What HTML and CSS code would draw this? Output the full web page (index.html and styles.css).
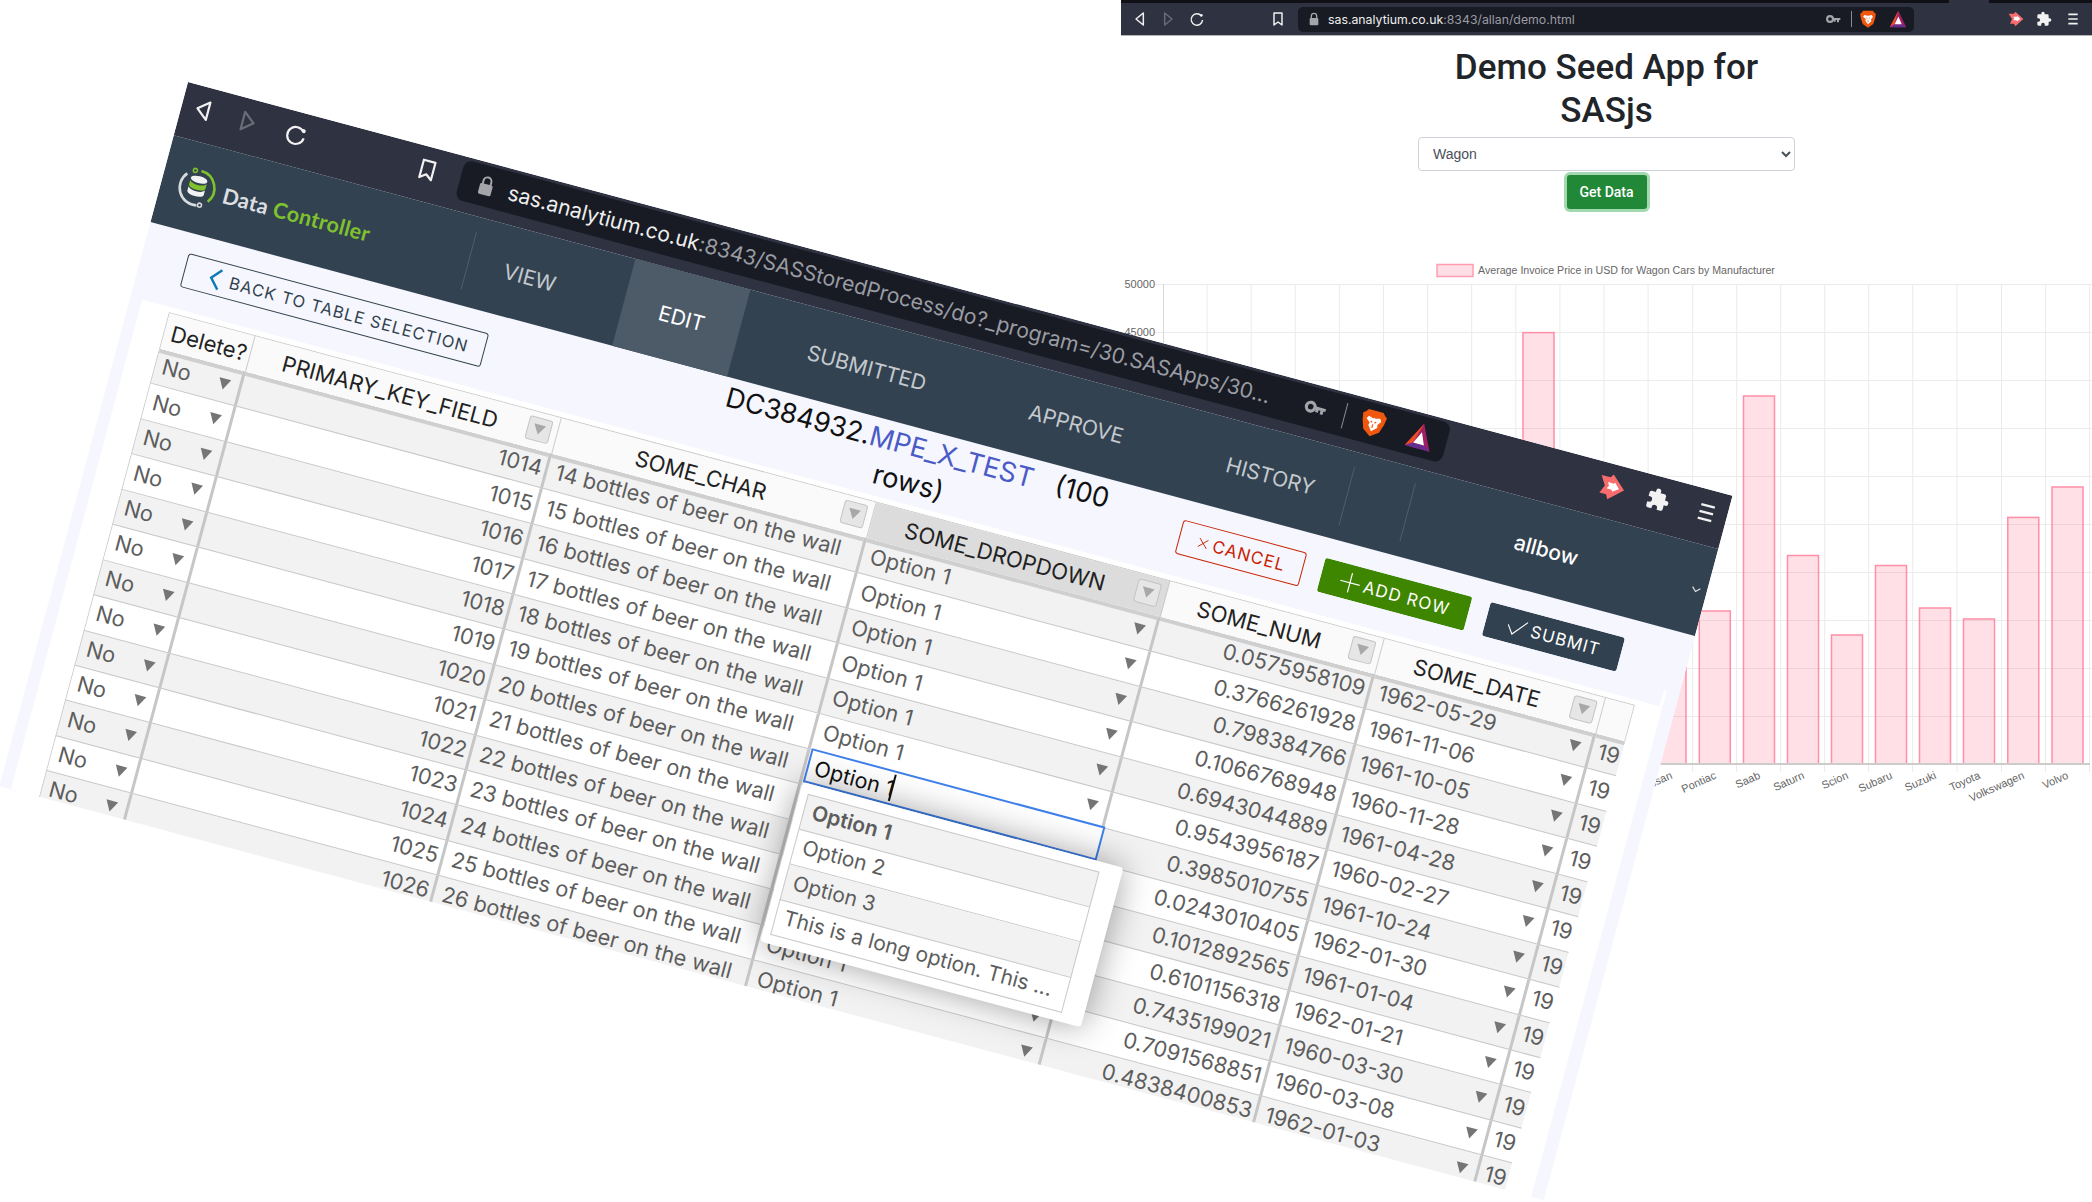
FILE: index.html
```html
<!DOCTYPE html>
<html>

<head>
  <title>Data Controller and Demo Seed App</title>
  <link rel="stylesheet" href="styles.css">
</head>

<body>
  <svg class="icon-defs">
    <symbol id="i-back" viewBox="0 0 24 24"><path d="M17 3 6 12l11 9z" fill="none" stroke="currentColor" stroke-width="2.2" stroke-linejoin="round"/></symbol>
    <symbol id="i-fwd" viewBox="0 0 24 24"><path d="m7 3 11 9-11 9z" fill="none" stroke="currentColor" stroke-width="2.2" stroke-linejoin="round"/></symbol>
    <symbol id="i-reload" viewBox="0 0 24 24"><path d="M18.5 7.5a8.5 8.5 0 1 0 1.8 6" fill="none" stroke="currentColor" stroke-width="2.2"/><circle cx="18.5" cy="6.5" r="2" fill="currentColor"/></symbol>
    <symbol id="i-mark" viewBox="0 0 24 24"><path d="M6 3h12v18l-6-4.5L6 21z" fill="none" stroke="currentColor" stroke-width="2.2" stroke-linejoin="round"/></symbol>
    <symbol id="i-lock" viewBox="0 0 24 24"><path d="M8 11V7.5a4 4 0 0 1 8 0V11" fill="none" stroke="currentColor" stroke-width="2"/><rect x="5.5" y="10.5" width="13" height="11" rx="1.5" fill="currentColor"/></symbol>
    <symbol id="i-key" viewBox="0 0 24 24"><circle cx="7.5" cy="12" r="4.4" fill="none" stroke="currentColor" stroke-width="3.2"/><path d="M12 10.5h11v3h-2v3.5h-3v-3.500h-2v2.500h-3v-2.500h-1z" fill="currentColor"/></symbol>
    <symbol id="i-brave" viewBox="0 0 24 24"><path d="M5.500 1h13l2 2.500L22.500 5l-1 6-2.500 7.500L12 23.500l-7-5L2.500 11l-1-6 2-1.500z" fill="#f1570f"/><path d="M7 6.500l4 1.200 1-.400 1 .400 4-1.200 1.500 2.500-2.500 3.500 .5 2.500L12 19l-3.500-4.500.5-2.500L5.500 9z" fill="#fff"/><path d="M9.500 10.500l1.500.800M14.500 10.500l-1.500.800M12 13v3" stroke="#f1570f" stroke-width="1" fill="none"/></symbol>
    <symbol id="i-bat" viewBox="0 0 24 24"><path d="M12.500 1 1 23h22z" fill="#9e1f63"/><path d="M12.500 1 1 23l6.500-4z" fill="#ef4a26"/><path d="m1 23 6.500-4h9.500L23 23z" fill="#662d91"/><path d="m12.500 8.500-5 10.500h9.500z" fill="#fff"/></symbol>
    <symbol id="i-flag" viewBox="0 0 24 24"><path d="M1 4h8l2-3 12 11-12 11-2-4H3l3-7z" fill="#f76d6d"/><path d="M8 8.500h5l1-1 4.500 4.500-5 3.500-1-1.500H8l1.500-2.500z" fill="#fff"/></symbol>
    <symbol id="i-puzzle" viewBox="0 0 24 24"><path d="M20.500 11H19V7a2 2 0 0 0-2-2h-4V3.500a2.500 2.500 0 0 0-5 0V5H4a2 2 0 0 0-2 2v3.800h1.500a2.700 2.700 0 0 1 0 5.400H2V20a2 2 0 0 0 2 2h3.800v-1.500a2.700 2.700 0 0 1 5.400 0V22H17a2 2 0 0 0 2-2v-4h1.500a2.500 2.500 0 0 0 0-5z" fill="currentColor"/></symbol>
    <symbol id="i-menu" viewBox="0 0 24 24"><path d="M5 5h14M5 12h14M5 19h14" fill="none" stroke="currentColor" stroke-width="2.400"/></symbol>
  </svg>

  <div class="stage">

    <section class="demo-window">
      <div class="tab-strip"><span class="tab-strip-active"></span></div>
      <div class="tbar tbar-small">
        <svg class="ico ico-back"><use href="#i-back"/></svg>
        <svg class="ico ico-fwd"><use href="#i-fwd"/></svg>
        <svg class="ico ico-reload"><use href="#i-reload"/></svg>
        <svg class="ico ico-mark"><use href="#i-mark"/></svg>
        <div class="pill">
          <svg class="ico ico-lock"><use href="#i-lock"/></svg>
          <span class="url"><b>sas.analytium.co.uk</b>:8343/allan/demo.html</span>
          <svg class="ico ico-key"><use href="#i-key"/></svg>
          <span class="pill-sep"></span>
          <svg class="ico ico-brave"><use href="#i-brave"/></svg>
          <svg class="ico ico-bat"><use href="#i-bat"/></svg>
        </div>
        <svg class="ico ico-flag"><use href="#i-flag"/></svg>
        <svg class="ico ico-puzzle"><use href="#i-puzzle"/></svg>
        <svg class="ico ico-menu"><use href="#i-menu"/></svg>
      </div>

      <div class="demo-body">
        <h1 class="demo-title">Demo Seed App for<br>SASjs</h1>
        <select class="demo-select">
          <option>Wagon</option>
        </select>
        <button class="demo-btn">Get Data</button>

        <svg class="chart" viewBox="1121 256 971 560" width="971" height="560">
          <rect class="swatch" x="1437" y="264.500" width="36" height="12"/>
          <text class="legend" x="1478" y="274">Average Invoice Price in USD for Wagon Cars by Manufacturer</text>
          <text class="y-label" x="1155" y="288">50000</text>
          <text class="y-label" x="1155" y="336">45000</text>

          <path class="grid" d="M1155 284.500H2092M1155 332.500H2092M1155 380.500H2092M1155 428.500H2092M1155 476.500H2092M1155 524.500H2092M1155 572.500H2092M1155 620.500H2092M1155 668.500H2092M1155 716.500H2092"/>
          <path class="grid" d="M1207.100 284V772M1251.200 284V772M1295.300 284V772M1339.400 284V772M1383.500 284V772M1427.600 284V772M1471.700 284V772M1515.800 284V772M1559.900 284V772M1604 284V772M1648.100 284V772M1692.700 284V772M1736.700 284V772M1780.700 284V772M1824.700 284V772M1868.700 284V772M1912.700 284V772M1957 284V772M2001.500 284V772M2045.500 284V772M2089.500 284V772"/>
          <path class="axis-y" d="M1163.500 284V772"/>

          <rect class="bar" x="1523" y="332.600" width="31" height="431"/>
          <rect class="bar" x="1655" y="600" width="31" height="164"/>
          <rect class="bar" x="1699.300" y="611" width="31" height="153"/>
          <rect class="bar" x="1743.500" y="396" width="31" height="368"/>
          <rect class="bar" x="1787.500" y="555.500" width="31" height="208.500"/>
          <rect class="bar" x="1831.500" y="635" width="31" height="129"/>
          <rect class="bar" x="1875.500" y="565.500" width="31" height="198.500"/>
          <rect class="bar" x="1919.500" y="608" width="31" height="156"/>
          <rect class="bar" x="1963.500" y="619" width="31" height="145"/>
          <rect class="bar" x="2007.800" y="517.400" width="31" height="246.600"/>
          <rect class="bar" x="2052" y="487" width="31" height="277"/>
          <path class="axis-x" d="M1163 764H2090"/>

          <text class="x-label" transform="translate(1673 778) rotate(-24)">Nissan</text>
          <text class="x-label" transform="translate(1717 778) rotate(-24)">Pontiac</text>
          <text class="x-label" transform="translate(1761 778) rotate(-24)">Saab</text>
          <text class="x-label" transform="translate(1805 778) rotate(-24)">Saturn</text>
          <text class="x-label" transform="translate(1849 778) rotate(-24)">Scion</text>
          <text class="x-label" transform="translate(1893 778) rotate(-24)">Subaru</text>
          <text class="x-label" transform="translate(1937 778) rotate(-24)">Suzuki</text>
          <text class="x-label" transform="translate(1981 778) rotate(-24)">Toyota</text>
          <text class="x-label" transform="translate(2025 778) rotate(-24)">Volkswagen</text>
          <text class="x-label" transform="translate(2069 778) rotate(-24)">Volvo</text>
        </svg>
      </div>
    </section>

    <section class="dc-window">
      <div class="tbar tbar-large">
        <svg class="ico ico-back"><use href="#i-back"/></svg>
        <svg class="ico ico-fwd"><use href="#i-fwd"/></svg>
        <svg class="ico ico-reload"><use href="#i-reload"/></svg>
        <svg class="ico ico-mark"><use href="#i-mark"/></svg>
        <div class="pill">
          <svg class="ico ico-lock"><use href="#i-lock"/></svg>
          <span class="url"><b>sas.analytium.co.uk</b>:8343/SASStoredProcess/do?_program=/30.SASApps/30...</span>
          <svg class="ico ico-key"><use href="#i-key"/></svg>
          <span class="pill-sep"></span>
          <svg class="ico ico-brave"><use href="#i-brave"/></svg>
          <svg class="ico ico-bat"><use href="#i-bat"/></svg>
        </div>
        <svg class="ico ico-flag"><use href="#i-flag"/></svg>
        <svg class="ico ico-puzzle"><use href="#i-puzzle"/></svg>
        <svg class="ico ico-menu"><use href="#i-menu"/></svg>
      </div>

      <header class="app-header">
        <div class="logo">
          <svg class="logo-mark" viewBox="0 0 40 40">
            <path d="M20 2.500a17.500 17.500 0 0 1 14 28" fill="none" stroke="#7fc22e" stroke-width="2.600"/>
            <path d="M7 8.500a17.500 17.500 0 0 0 17 28.500" fill="none" stroke="#d8dbde" stroke-width="2.600"/>
            <circle cx="14" cy="3.500" r="2" fill="none" stroke="#7fc22e" stroke-width="1.500"/>
            <circle cx="27" cy="36" r="2" fill="none" stroke="#d8dbde" stroke-width="1.500"/>
            <ellipse cx="20" cy="11.500" rx="8.500" ry="3.500" fill="#f1f2f3"/>
            <path d="M11.500 14v4.500c0 2 3.800 3.500 8.500 3.500s8.500-1.500 8.500-3.500V14c-1.500 2-5 3-8.500 3s-7-1-8.500-3z" fill="#7fc22e"/>
            <path d="M11.500 20.500V25c0 2 3.800 3.500 8.500 3.500s8.500-1.500 8.500-3.500v-4.500c-1.500 2-5 3-8.500 3s-7-1-8.500-3z" fill="#f1f2f3"/>
          </svg>
          <span class="logo-text">Data <em>Controller</em></span>
        </div>
        <nav class="app-nav">
          <a class="nav-tab">VIEW</a>
          <a class="nav-tab is-active">EDIT</a>
          <a class="nav-tab">SUBMITTED</a>
          <a class="nav-tab">APPROVE</a>
          <a class="nav-tab">HISTORY</a>
        </nav>
        <span class="hdr-sep"></span>
        <span class="hdr-sep hdr-sep-user"></span>
        <div class="user">
          <span class="user-name">allbow</span>
          <svg class="user-chev" viewBox="0 0 12 12"><path d="m2 4 4 4 4-4" fill="none" stroke="currentColor" stroke-width="1.200"/></svg>
        </div>
      </header>

      <div class="toolbar">
        <div class="toolbar-left">
          <button class="btn btn-back">
            <svg class="btn-chev" viewBox="0 0 14 24"><path d="M12 2 3 12l9 10" fill="none" stroke="#0a7cb5" stroke-width="2.400"/></svg>
            BACK TO TABLE SELECTION
          </button>
        </div>
        <h2 class="table-title">DC384932.<span class="table-name">MPE_X_TEST</span>&nbsp;&nbsp; (100<br>rows)</h2>
        <div class="toolbar-right">
          <button class="btn btn-cancel">
            <svg class="btn-ico" viewBox="0 0 16 16"><path d="m3 3 10 10M13 3 3 13" fill="none" stroke="currentColor" stroke-width="1"/></svg>
            CANCEL
          </button>
          <button class="btn btn-add">
            <svg class="btn-ico btn-ico-big" viewBox="0 0 22 22"><path d="M11 1v20M1 11h20" fill="none" stroke="currentColor" stroke-width="1.200"/></svg>
            ADD ROW
          </button>
          <button class="btn btn-submit">
            <svg class="btn-ico btn-ico-big" viewBox="0 0 26 22"><path d="m2 10 7 10L24 2" fill="none" stroke="currentColor" stroke-width="1.300"/></svg>
            SUBMIT
          </button>
        </div>
      </div>

      <div class="panel">
        <div class="hot">
          <div class="hot-row hot-head">
            <div class="cell"><span>Delete?</span></div>
            <div class="cell head-mid"><span>PRIMARY_KEY_FIELD</span><i class="filter"></i></div>
            <div class="cell head-mid"><span>SOME_CHAR</span><i class="filter"></i></div>
            <div class="cell head-mid head-on"><span>SOME_DROPDOWN</span><i class="filter"></i></div>
            <div class="cell head-mid"><span>SOME_NUM</span><i class="filter"></i></div>
            <div class="cell head-mid"><span>SOME_DATE</span><i class="filter"></i></div>
            <div class="cell"></div>
          </div>

          <div class="hot-row"><div class="cell dd">No</div><div class="cell num">1014</div><div class="cell">14 bottles of beer on the wall</div><div class="cell dd">Option 1</div><div class="cell num">0.0575958109</div><div class="cell dd">1962-05-29</div><div class="cell">19</div></div>
          <div class="hot-row"><div class="cell dd">No</div><div class="cell num">1015</div><div class="cell">15 bottles of beer on the wall</div><div class="cell dd">Option 1</div><div class="cell num">0.3766261928</div><div class="cell dd">1961-11-06</div><div class="cell">19</div></div>
          <div class="hot-row"><div class="cell dd">No</div><div class="cell num">1016</div><div class="cell">16 bottles of beer on the wall</div><div class="cell dd">Option 1</div><div class="cell num">0.798384766</div><div class="cell dd">1961-10-05</div><div class="cell">19</div></div>
          <div class="hot-row"><div class="cell dd">No</div><div class="cell num">1017</div><div class="cell">17 bottles of beer on the wall</div><div class="cell dd">Option 1</div><div class="cell num">0.1066768948</div><div class="cell dd">1960-11-28</div><div class="cell">19</div></div>
          <div class="hot-row"><div class="cell dd">No</div><div class="cell num">1018</div><div class="cell">18 bottles of beer on the wall</div><div class="cell dd">Option 1</div><div class="cell num">0.6943044889</div><div class="cell dd">1961-04-28</div><div class="cell">19</div></div>
          <div class="hot-row"><div class="cell dd">No</div><div class="cell num">1019</div><div class="cell">19 bottles of beer on the wall</div><div class="cell dd">Option 1</div><div class="cell num">0.9543956187</div><div class="cell dd">1960-02-27</div><div class="cell">19</div></div>
          <div class="hot-row"><div class="cell dd">No</div><div class="cell num">1020</div><div class="cell">20 bottles of beer on the wall</div><div class="cell dd">Option 1</div><div class="cell num">0.3985010755</div><div class="cell dd">1961-10-24</div><div class="cell">19</div></div>
          <div class="hot-row"><div class="cell dd">No</div><div class="cell num">1021</div><div class="cell">21 bottles of beer on the wall</div><div class="cell dd">Option 1</div><div class="cell num">0.0243010405</div><div class="cell dd">1962-01-30</div><div class="cell">19</div></div>
          <div class="hot-row"><div class="cell dd">No</div><div class="cell num">1022</div><div class="cell">22 bottles of beer on the wall</div><div class="cell dd">Option 1</div><div class="cell num">0.1012892565</div><div class="cell dd">1961-01-04</div><div class="cell">19</div></div>
          <div class="hot-row"><div class="cell dd">No</div><div class="cell num">1023</div><div class="cell">23 bottles of beer on the wall</div><div class="cell dd">Option 1</div><div class="cell num">0.6101156318</div><div class="cell dd">1962-01-21</div><div class="cell">19</div></div>
          <div class="hot-row"><div class="cell dd">No</div><div class="cell num">1024</div><div class="cell">24 bottles of beer on the wall</div><div class="cell dd">Option 1</div><div class="cell num">0.7435199021</div><div class="cell dd">1960-03-30</div><div class="cell">19</div></div>
          <div class="hot-row"><div class="cell dd">No</div><div class="cell num">1025</div><div class="cell">25 bottles of beer on the wall</div><div class="cell dd">Option 1</div><div class="cell num">0.7091568851</div><div class="cell dd">1960-03-08</div><div class="cell">19</div></div>
          <div class="hot-row"><div class="cell dd">No</div><div class="cell num">1026</div><div class="cell">26 bottles of beer on the wall</div><div class="cell dd">Option 1</div><div class="cell num">0.4838400853</div><div class="cell dd">1962-01-03</div><div class="cell">19</div></div>

          <div class="hot-editor">Option 1<span class="caret"></span></div>
          <div class="hot-menu">
            <div class="menu-row is-current">Option 1</div>
            <div class="menu-row">Option 2</div>
            <div class="menu-row">Option 3</div>
            <div class="menu-row">This is a long option. This ...</div>
          </div>
        </div>
      </div>
    </section>

  </div>
</body>

</html>
```

FILE: styles.css
```css
body {
  margin: 0;
  background: #fff;
  font-family: Inter, "Liberation Sans", sans-serif;
}

.icon-defs {
  display: none;
}

.stage {
  position: relative;
  width: 2092px;
  height: 1202px;
  overflow: hidden;
}

/* browser toolbar, used at two sizes */
.tbar {
  display: flex;
  align-items: center;
  background: #2f3241;
  color: #f2f2f2;
}

.ico {
  flex: none;
}

.ico-fwd {
  color: #6a6c78;
}

.pill {
  display: flex;
  align-items: center;
  flex: none;
  background: #181b23;
}

.url {
  flex: 1;
  color: #9a9ca3;
  white-space: nowrap;
}

.url b {
  color: #eee;
  font-weight: 400;
}

.ico-lock,
.ico-key {
  color: #a4a5aa;
}

.pill-sep {
  width: 1px;
  background: #8a8c94;
}

/* large toolbar on the tilted window */
.tbar-large {
  height: 55px;
  padding-bottom: 9px;
  box-sizing: border-box;
}

.tbar-large .ico {
  width: 24px;
  height: 24px;
}

.tbar-large .ico-back { margin-left: 10px; }
.tbar-large .ico-fwd { margin-left: 22px; }
.tbar-large .ico-reload { margin-left: 26px; }
.tbar-large .ico-mark { margin-left: 112px; }
.tbar-large .ico-flag { margin: 0 -2px 0 157px; width: 28px; height: 28px; }
.tbar-large .ico-puzzle { margin-left: 24px; }
.tbar-large .ico-menu { margin-left: 26px; }

.tbar-large .pill {
  width: 1021px;
  height: 41px;
  margin-left: 22px;
  padding: 0 13px 0 15px;
  box-sizing: border-box;
  border-radius: 8px;
}

.tbar-large .url {
  margin-left: 11px;
  font-size: 21.100px;
}

.tbar-large .pill-sep {
  height: 26px;
  margin: 0 15px 0 18px;
}

.tbar-large .ico-brave {
  width: 28px;
  height: 28px;
}

.tbar-large .ico-bat {
  width: 28px;
  height: 28px;
  margin-left: 21px;
}

/* small toolbar on the back window */
.tbar-small {
  height: 32px;
  border-bottom: 1px solid #b5b5b8;
}

.tbar-small .ico {
  width: 16px;
  height: 16px;
}

.tbar-small .ico-back { margin-left: 11px; }
.tbar-small .ico-fwd { margin-left: 12px; }
.tbar-small .ico-reload { margin-left: 13px; }
.tbar-small .ico-mark { margin-left: 65px; }
.tbar-small .ico-flag { margin-left: 94px; }
.tbar-small .ico-puzzle { margin-left: 12px; }
.tbar-small .ico-menu { margin-left: 13px; }

.tbar-small .pill {
  width: 616px;
  height: 25px;
  margin-left: 12px;
  padding: 0 7px 0 8px;
  box-sizing: border-box;
  border-radius: 5px;
}

.tbar-small .url {
  margin-left: 6px;
  font-size: 12.300px;
}

.tbar-small .pill-sep {
  height: 16px;
  margin: 0 7px 0 10px;
}

.tbar-small .ico-brave {
  width: 18px;
  height: 18px;
}

.tbar-small .ico-bat {
  width: 18px;
  height: 18px;
  margin-left: 12px;
}

/* back window */
.demo-window {
  position: absolute;
  left: 1121px;
  top: 0;
  right: 0;
  bottom: 0;
}

.tab-strip {
  position: relative;
  height: 3px;
  background: #101116;
}

.tab-strip-active {
  position: absolute;
  left: 828px;
  top: 0;
  width: 40px;
  height: 3px;
  background: #2f3241;
}

.demo-body {
  display: flex;
  flex-direction: column;
  align-items: center;
}

.demo-title {
  margin: 10px 0 0;
  font-family: Roboto, "Liberation Sans", sans-serif;
  font-size: 35px;
  font-weight: 500;
  line-height: 43px;
  text-align: center;
  color: #212529;
}

.demo-select {
  width: 377px;
  height: 34px;
  margin-top: 5px;
  padding: 0 10px;
  border: 1px solid #ced4da;
  border-radius: 4px;
  background: #fff;
  font-family: "Liberation Sans", sans-serif;
  font-size: 14px;
  color: #495057;
}

.demo-btn {
  width: 80px;
  height: 34px;
  margin-top: 4px;
  border: 0;
  border-radius: 3px;
  background: #218838;
  box-shadow: 0 0 0 3px rgba(72, 180, 97, 0.5);
  font-family: Roboto, "Liberation Sans", sans-serif;
  font-size: 14px;
  font-weight: 500;
  color: #fff;
}

.chart {
  display: block;
  margin-top: 47px;
  font-family: "Liberation Sans", sans-serif;
}

.swatch {
  fill: #ffdfe5;
  stroke: #ff9db2;
  stroke-width: 1.5;
}

.legend {
  font-size: 10.650px;
  fill: #666;
}

.y-label,
.x-label {
  font-size: 11px;
  fill: #666;
  text-anchor: end;
}

.grid {
  fill: none;
  stroke: #ebebeb;
  stroke-width: 1;
}

.axis-y {
  fill: none;
  stroke: #d8d8d8;
  stroke-width: 1;
}

.axis-x {
  fill: none;
  stroke: #ccc;
  stroke-width: 2;
}

.bar {
  fill: rgba(255, 99, 132, 0.2);
  stroke: #ff8ea6;
  stroke-width: 1.5;
}

/* tilted window */
.dc-window {
  position: absolute;
  left: 188px;
  top: 82px;
  width: 1599px;
  height: 729px;
  display: flex;
  flex-direction: column;
  background: #f5f6fe;
  color: #222;
  overflow: hidden;
  transform: rotate(15deg);
  transform-origin: 0 0;
}

.app-header {
  display: flex;
  align-items: center;
  height: 90px;
  background: #334250;
  flex: none;
}

.logo {
  display: flex;
  align-items: center;
  width: 317px;
  padding-left: 16px;
  box-sizing: border-box;
}

.logo-mark {
  width: 40px;
  height: 40px;
}

.logo-text {
  margin-left: 7px;
  font-family: Lato, sans-serif;
  font-size: 21.500px;
  font-weight: 700;
  letter-spacing: 0.3px;
  color: #dcdfe2;
}

.logo-text em {
  font-style: normal;
  color: #7fc22e;
}

.app-nav {
  display: flex;
  height: 100%;
}

.app-nav::before,
.hdr-sep {
  content: "";
  width: 1px;
  height: 60px;
  background: #4f5d6a;
  flex: none;
  align-self: center;
}

.nav-tab {
  display: flex;
  align-items: center;
  margin-left: 35px;
  padding: 0 36px;
  font-size: 21px;
  color: #c3c9ce;
}

.nav-tab:first-of-type {
  margin-left: 0;
}

.nav-tab.is-active {
  background: #4d5b68;
  color: #fff;
}

.hdr-sep {
  margin-left: -3px;
}

.hdr-sep-user {
  margin-left: 62px;
}

.user {
  flex: 1;
  display: flex;
  align-items: center;
  color: #fff;
}

.user-name {
  flex: 1;
  padding-right: 6px;
  text-align: center;
  font-size: 21px;
  font-weight: 500;
}

.user-chev {
  width: 12px;
  height: 12px;
  margin-right: 5px;
  color: #dfe3e6;
}

.toolbar {
  display: grid;
  grid-template-columns: 1fr 400px 1fr;
  height: 77px;
  flex: none;
}

.toolbar-left {
  padding: 20px 0 0 45px;
}

.toolbar-right {
  display: flex;
  justify-content: flex-end;
  gap: 19px;
  padding: 20px 67px 0 0;
}

.btn {
  display: flex;
  align-items: center;
  justify-content: center;
  height: 35px;
  padding: 0;
  border: 1px solid transparent;
  border-radius: 3px;
  box-sizing: border-box;
  background: none;
  font-family: Inter, sans-serif;
  font-size: 17px;
  letter-spacing: 1px;
}

.btn-back {
  width: 311px;
  padding-left: 8px;
  border-color: #33424f;
  color: #33424f;
  font-size: 16.500px;
}

.btn-chev {
  width: 14px;
  height: 24px;
  margin-right: 8px;
}

.btn-cancel {
  width: 128px;
  border-color: #c92100;
  color: #c92100;
}

.btn-add {
  width: 152px;
  background: #3f8600;
  color: #fff;
}

.btn-submit {
  width: 139px;
  background: #314150;
  color: #fff;
}

.btn-ico {
  width: 14px;
  height: 14px;
  margin-right: 3px;
}

.btn-ico-big {
  width: 22px;
  height: 22px;
}

.table-title {
  margin: 2px 0 0;
  font-size: 27.200px;
  font-weight: 400;
  line-height: 36px;
  text-align: center;
  color: #111;
}

.table-name {
  color: #4a5bc6;
}

/* the grid */
.panel {
  position: relative;
  flex: 1;
  margin: 0 13px 0 12px;
  padding: 5px 0 0 29px;
  background: #fff;
}

.panel::after {
  content: "";
  position: absolute;
  right: 0;
  top: -17px;
  width: 3px;
  height: 17px;
  background: #fff;
}

.hot {
  position: relative;
  height: 502px;
  overflow: hidden;
  width: 1518px;
}

.hot-row {
  display: grid;
  grid-template-columns: 90px 317px 326px 304px 222px 229px 30px;
  height: 36.450px;
}

.hot-row:nth-child(even) {
  background: #f2f2f2;
}

.hot-head {
  height: 38px;
  background: #fafafa;
  border-top: 1px solid #ccc;
  box-sizing: border-box;
  color: #222;
}

.hot-row:nth-child(2) .cell {
  box-shadow: inset 0 4px 0 #cfcfcf;
}

.cell {
  position: relative;
  display: flex;
  align-items: center;
  padding: 0 8px 3px;
  border-right: 3px solid #c6c6c6;
  border-bottom: 1px solid #c8c8c8;
  box-sizing: border-box;
  font-size: 21.700px;
  color: #5d5d5d;
  white-space: nowrap;
  overflow: hidden;
}

.cell:first-child {
  border-left: 1px solid #ccc;
  padding-left: 7px;
}

.cell:last-child {
  border-right: 0;
  padding: 0 0 3px 6px;
}

.hot-head .cell {
  padding-bottom: 0;
  border-right: 1px solid #ccc;
  border-bottom: 0;
  font-size: 22px;
  color: #222;
}

.hot-head .head-mid {
  justify-content: center;
  padding-right: 35px;
}

.head-on {
  background: #dcdcdc;
}

.filter {
  position: absolute;
  right: 6px;
  top: 5px;
  width: 24px;
  height: 24px;
  border: 1px solid #c4c4c4;
  border-radius: 3px;
  box-sizing: border-box;
  background: #e6e6e6;
}

.filter::after {
  content: "";
  position: absolute;
  left: 5px;
  top: 6px;
  border-style: solid;
  border-width: 10px 6px 0;
  border-color: #a8a8a8 transparent transparent;
}

.num {
  justify-content: flex-end;
  padding-right: 3px;
}

.dd::after {
  content: "";
  position: absolute;
  right: 9.500px;
  top: 12px;
  border-style: solid;
  border-width: 11px 6px 0;
  border-color: #757575 transparent transparent;
}

.hot-editor {
  position: absolute;
  left: 734px;
  top: 255px;
  display: flex;
  align-items: center;
  width: 304px;
  height: 35px;
  padding-left: 6px;
  border: 2.500px solid #3f80ea;
  box-sizing: border-box;
  background: #fff;
  font-size: 21.500px;
  color: #111;
}

.caret {
  width: 1.500px;
  height: 27px;
  margin-left: -3px;
  background: #111;
}

.hot-menu {
  position: absolute;
  left: 734px;
  top: 290px;
  width: 332px;
  height: 165px;
  padding: 10px 22px 0 8px;
  box-sizing: border-box;
  border-radius: 4px;
  background: #fff;
  box-shadow: 0 0 34px rgba(0, 0, 0, 0.38);
}

.menu-row {
  display: flex;
  align-items: center;
  height: 36.500px;
  padding: 0 0 3px 8px;
  border: 1px solid #c8c8c8;
  border-top: 0;
  box-sizing: border-box;
  font-size: 21px;
  color: #5d5d5d;
}

.menu-row:first-child {
  border-top: 1px solid #c8c8c8;
}

.menu-row:nth-child(odd) {
  background: #f2f2f2;
}

.is-current {
  font-weight: 600;
}
```
